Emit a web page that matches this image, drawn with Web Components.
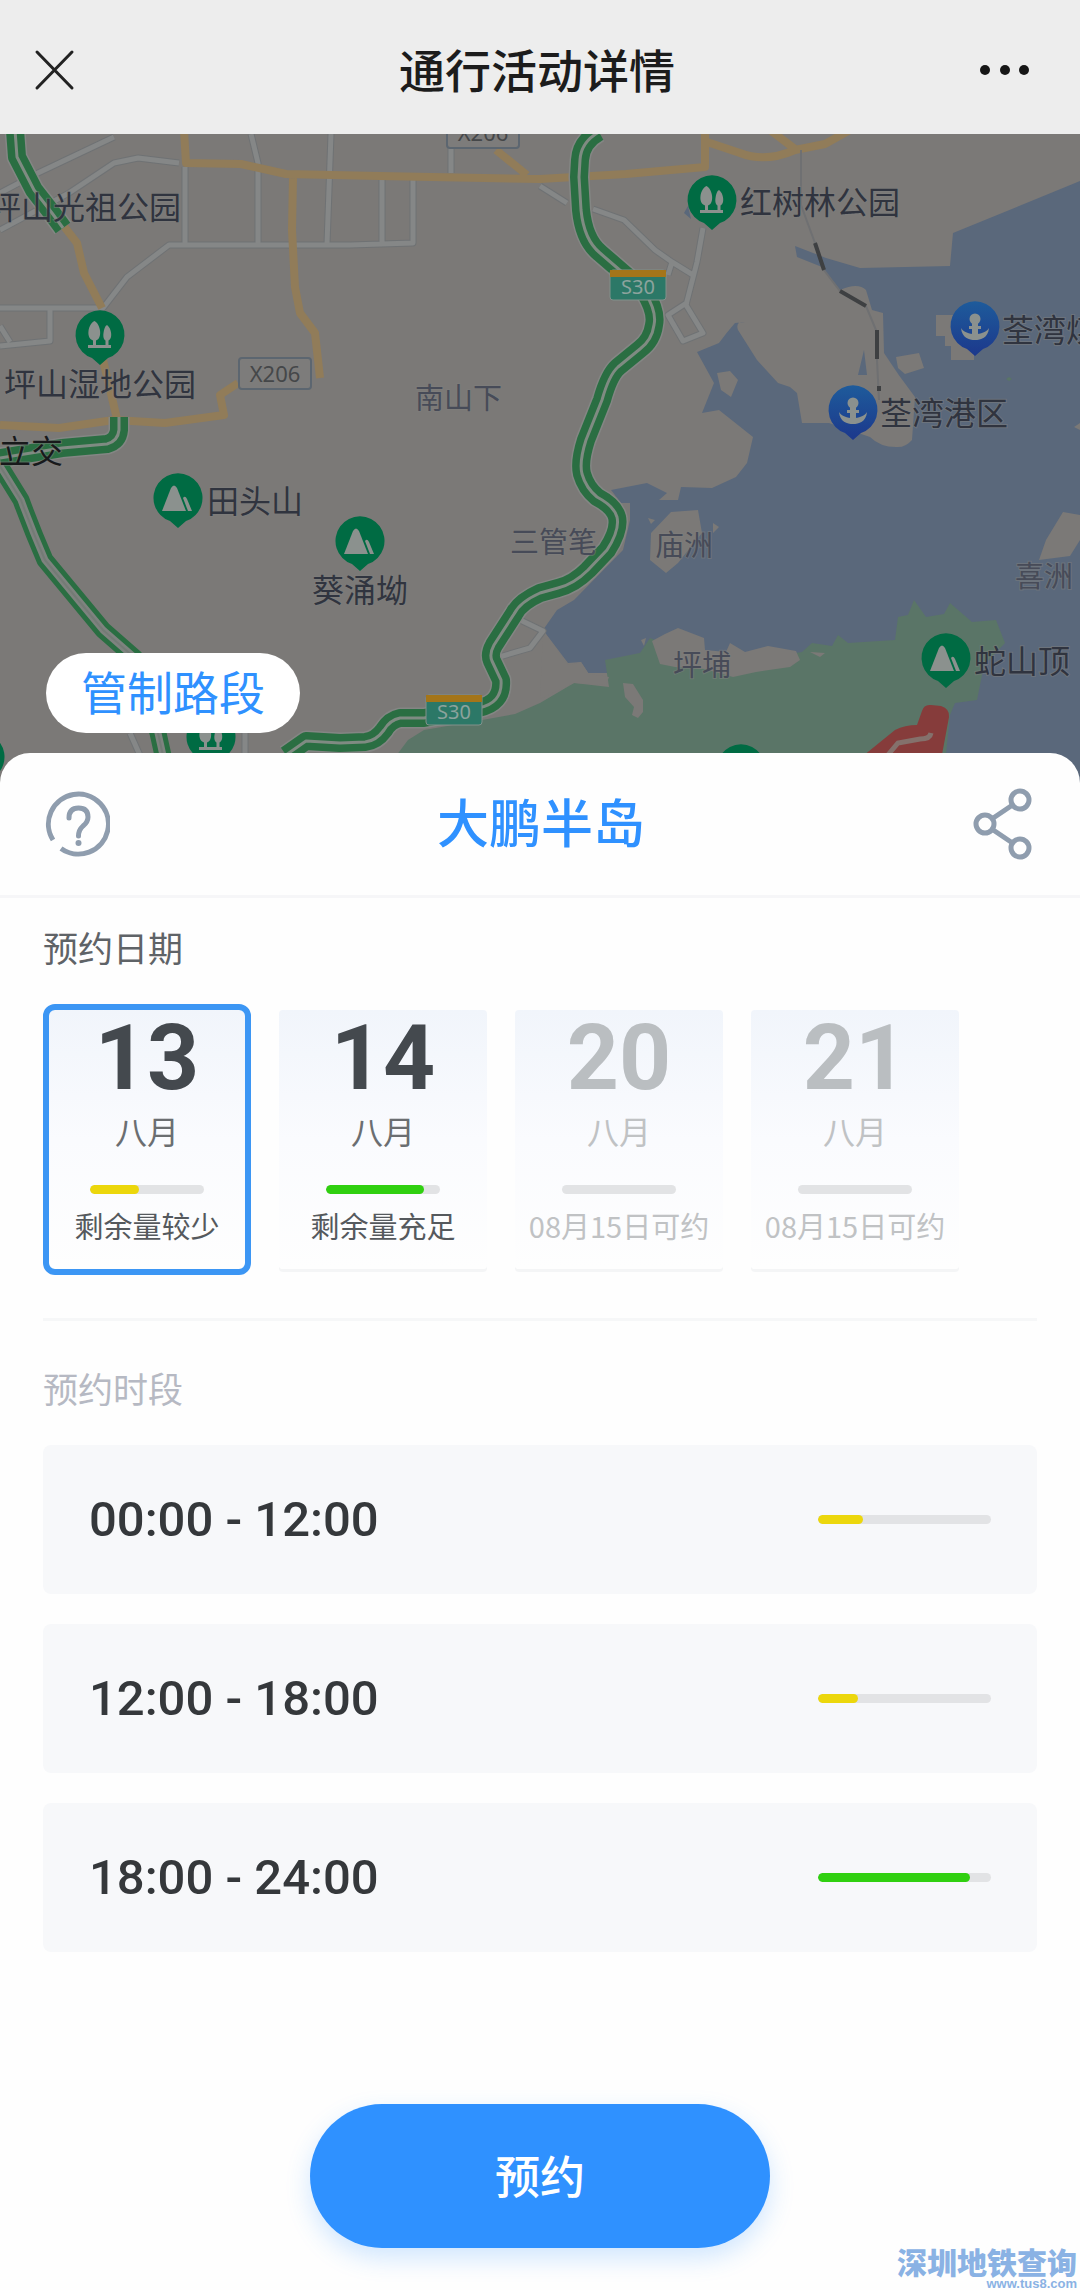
<!DOCTYPE html>
<html lang="zh-CN">
<head>
<meta charset="utf-8">
<meta name="viewport" content="width=device-width, initial-scale=1">
<title>通行活动详情</title>
<style>
body{margin:0;background:#fefefe;font-family:"Noto Sans CJK SC",sans-serif;color:#444a50}
</style>
</head>
<body>
<booking-page></booking-page>

<script>
class Base extends HTMLElement {
  connectedCallback() {
    if (this.shadowRoot) return;
    const root = this.attachShadow({ mode: 'open' });
    root.innerHTML = '<style>:host{display:block;box-sizing:border-box}*{box-sizing:border-box}button{font-family:inherit;margin:0;padding:0;border:0;background:none;cursor:pointer;color:inherit}svg{display:block}</style>' + this.view();
  }
}

customElements.define('nav-header', class extends Base {
  view() {
    return `<style>
      header{display:flex;align-items:center;justify-content:space-between;height:134px;padding:6px 50px 0 32px;background:#ededed;color:#1c1c1c}
      h1{margin:0;padding-bottom:4px;font-size:46px;line-height:60px;font-weight:500}
      .end{width:50px}
      .start{width:62px}
    </style>
    <header>
      <button class="start" aria-label="关闭"><svg width="46" height="46" viewBox="0 0 46 46" stroke="#222" stroke-width="3" stroke-linecap="round"><path d="M5 5L40 41M40 5L5 41"/></svg></button>
      <h1><slot></slot></h1>
      <button class="end" aria-label="更多"><svg width="50" height="20" viewBox="0 0 50 20" fill="#161616"><circle cx="5" cy="10" r="5"/><circle cx="25" cy="10" r="5"/><circle cx="44" cy="10" r="5"/></svg></button>
    </header>`;
  }
});

customElements.define('route-map', class extends Base {
  view() {
    const label = (x, cy, t, s = 32, cls = '') => `<text x="${x}" y="${cy + Math.round(s * 0.38) - 1}" font-size="${s}" class="${cls}">${t}</text>`;
    const pin = (x, y, kind) => {
      const art = {
        park: '<path d="M-5.500-14C-1.500-12 1-5 0 0C-.5 3-2 5-4 5.500V10H-1V12H-12V10H-7V5.500C-11 4-12 0-11.500-4C-11-9-8-13-5.500-14Z"/><path d="M7-10C10-8 12-2 11 2C10.500 4 9.500 5 8.500 5.500V10H11V13H-12V10H5.500V5.500C3.500 4.500 3 1 3.500-2C4-6 5-9 7-10Z"/>',
        peak: '<path d="M-16 13L-7-10Q-4-15-1-10L8 13Z"/><path d="M5 0Q7-3 9 1L14 13H10Z"/>',
        port: '<circle cx="0" cy="-7" r="5.500"/><path d="M-3-3H3V8H-3ZM-6 0H6V3H-6Z"/><path d="M-14 2C-9 10 9 10 14 2C13 12 6 14 0 14C-6 14-13 12-14 2Z"/>'
      }[kind];
      return `<g transform="translate(${x} ${y})"><path d="M0 30L-8 23A24.500 24.500 0 1 1 8 23Z" fill="${kind === 'port' ? 'url(#pb)' : '#006b43'}"/><g fill="#8b918e">${art}</g></g>`;
    };
    const s30 = (x, y) => `<g><rect x="${x}" y="${y}" width="56" height="30" rx="3" fill="#2c7867" stroke="#82918b"/><path d="M${x} ${y}H${x + 56}V${y + 7}H${x}Z" fill="#a47519"/><text x="${x + 28}" y="${y + 24}" font-size="20" text-anchor="middle" class="road s">S30</text></g>`;
    const x206 = (x, y) => `<g><rect x="${x}" y="${y}" width="72" height="31" rx="3" fill="#7d7c7b" stroke="#5c6670" stroke-width="2"/><text x="${x + 36}" y="${y + 24}" font-size="22" text-anchor="middle" class="road">X206</text></g>`;
    const highways = [
      'M15 130L17 157L34 190L52 213L63 228',
      'M119 417V430Q118 441 107 444L62 448L0 458',
      'M599 132Q581 142 580 160L579 177L581 210Q584 240 600 253L622 272L645 292Q657 312 654 325Q652 340 640 349L618 367Q609 375 602 400L586 440Q579 462 582 474Q586 488 597 497Q614 506 617 517Q620 530 607 550L588 570Q574 584 558 588L540 593Q520 602 514 614L494 645Q489 654 492 661L501 680Q502 692 496 699Q490 706 478 708L424 718H400Q390 720 384 730Q376 741 365 742L340 743L306 741L286 755'
    ];
    const thin = 'M0 466L21 500Q32 530 45 560L103 630L135 658L158 733L164 760';
    const lanes = 'M251 134L258 163V244M331 134L327 244M185 167V245M382 178V243M413 180V243L350 245H169L127 277L103 308H0M50 308V341L0 346M10 342L0 326M179 163L138 158L114 163L69 193L0 230M114 137L38 173L0 193M451 134V173M540 186L567 203M593 209L624 220L655 250L672 262L693 275M703 228L697 262L686 305L703 333L683 341L668 315L688 302M672 262L668 275M130 733L142 760M245 733V760M496 658L530 648L543 631L514 617';
    return `<style>
      :host{position:relative;height:650px;overflow:hidden;background:#7b7977}
      svg{width:100%;height:100%}
      text{fill:#30343f;paint-order:stroke;stroke:#7f7f7e;stroke-width:2px;stroke-opacity:.5}
      .minor{fill:#474b58}.dark{fill:#18191b}
      .road{font-family:"Noto Sans",sans-serif;fill:#454749;stroke:none}.s{fill:#8ca39d}
      button{position:absolute;left:46px;top:519px;width:254px;height:80px;border-radius:40px;background:#fff;color:#2f91ff;font-size:46px;line-height:74px;padding-bottom:6px}
    </style>
    <svg viewBox="0 134 1080 650" preserveAspectRatio="xMidYMin slice" role="img" aria-label="地图">
      <defs><linearGradient id="pb" x2="0" y2="1"><stop stop-color="#1e5b9b"/><stop offset="1" stop-color="#1c388c"/></linearGradient></defs>
      <rect y="134" width="1080" height="650" fill="#7b7977"/>
      <path fill="#5a687b" d="M1080 181L953 233L950 266L860 268L826 258L795 246L797 257L822 267L840 290Q858 282 866 290L872 310L883 313L884 353Q898 375 915 397L912 440Q905 448 896 447Q880 447 870 437L829 423H802L797 393L790 387L778 383L757 360L738 330Q735 321 745 322L735 323Q727 332 719 343L697 352L714 383L702 413L719 410L753 437L747 463L736 477L712 488L681 487L678 500H659L667 493L647 483L611 490L621 503H630V520L623 550L574 600L557 610L543 630L568 663L581 662L588 673H609V784H1080Z"/>
      <path fill="#7b7977" d="M671 512L698 510L702 533L678 563L666 573L650 560L651 533ZM1063 512L1080 515V540L1070 556L1039 560L1046 540ZM717 373L730 371L738 380L731 397L721 390ZM896 357L919 353L924 368L905 374L898 368ZM936 315H958V335H974V360H951V346H945V336H936ZM1074 427L1080 423V430ZM648 518L655 520L651 524ZM713 523L719 527L713 533Z"/>
      <path fill="#5a7567" d="M1006 379L1009 377L1012 379L1009 381Z"/>
      <path fill="#5a687b" d="M864 350L867 375H858ZM688 206L684 213L691 219Z"/>
      <path fill="#5a7567" d="M393 760L408 740L424 730L482 720L515 714L540 703L574 683L609 687L605 660L640 653L650 638L680 650L733 663L802 652L812 643L832 646L838 635L848 643L895 640L898 617L908 615L914 600L926 617L944 614L950 603L972 622L996 620L1005 643L984 665L977 700L955 703L950 715L943 784H393Z"/>
      <path fill="#7b7977" d="M652 641L665 634L678 628L704 638L705 650L726 652L730 643L745 652L768 646L796 651L800 660L790 667L756 672L733 677L705 669L675 667L660 664ZM543 630L568 665L581 662L589 674L609 677L606 685L574 683L540 699ZM623 683L633 684L643 700V712L638 718L632 715L634 707L625 697ZM810 652L825 653L820 657ZM641 640L646 638L644 646Z"/>
      <path fill="none" stroke="#6f7274" stroke-width="7" stroke-linejoin="round" d="${lanes}"/>
      <path fill="none" stroke="#858787" stroke-width="5" stroke-linejoin="round" d="${lanes}"/>
      <path fill="none" stroke="#917c59" stroke-width="8" stroke-linejoin="round" d="M184 130L186 163L241 164L286 174L379 176L540 179L626 174L705 167V130M707 142L740 153Q765 163 795 150L825 144L850 130M770 130L795 149M496 150L527 175M293 177L292 230L295 287L300 313L315 333L320 378M63 225L77 243L84 273L102 308M103 360L117 419M0 425L59 428L114 420L165 423L224 415L220 395L238 383"/>
      <path fill="none" stroke="#6f7072" stroke-width="2" d="M801 150V205L815 243L824 270L840 291L866 306L876 330L877 360L879 400"/>
      <path stroke="#3e4042" stroke-width="4" d="M815 243L824 270M840 291L866 306M877 330V359M879 386V391"/>
      <g fill="none" stroke-linejoin="round">
        ${highways.map(d => `<path d="${d}" stroke="#848684" stroke-width="21"/><path d="${d}" stroke="#2a6e42" stroke-width="18"/><path d="${d}" stroke="#7f8b82" stroke-width="3"/>`).join('')}
        <path d="${thin}" stroke="#2a6e42" stroke-width="17"/><path d="${thin}" stroke="#7e837f" stroke-width="7"/><path d="${thin}" stroke="#747b76" stroke-width="2"/>
      </g>
      <path fill="#863c3b" d="M922 711Q924 704 931 705L941 706Q950 709 949 717L941 760H858L895 730Q905 725 917 725Z"/>
      <path fill="none" stroke="#84716c" stroke-width="5" d="M887 756L898 743L920 739Q930 739 931 733"/>
      ${x206(239, 358)}${x206(447, 117)}${s30(610, 270)}${s30(426, 695)}
      ${pin(100, 335, 'park')}${pin(712, 200, 'park')}${pin(211, 737, 'park')}
      ${pin(178, 498, 'peak')}${pin(360, 541, 'peak')}${pin(946, 658, 'peak')}${pin(741, 769, 'peak')}${pin(-20, 757, 'park')}
      ${pin(975, 326, 'port')}${pin(853, 410, 'port')}
      ${label(-11, 208, '坪山光祖公园')}${label(4, 385, '坪山湿地公园')}${label(740, 203, '红树林公园')}
      ${label(-1, 452, '立交', 32, 'dark')}${label(207, 502, '田头山')}${label(312, 591, '葵涌坳')}
      ${label(974, 662, '蛇山顶')}${label(880, 414, '荃湾港区')}${label(1002, 331, '荃湾煤')}
      ${label(415, 399, '南山下', 29, 'minor')}${label(510, 543, '三管笔', 29, 'minor')}${label(655, 546, '庙洲', 29, 'minor')}
      ${label(1015, 577, '喜洲', 29, 'minor')}${label(673, 666, '坪埔', 29, 'minor')}
    </svg>
    <button><slot></slot></button>`;
  }
});

customElements.define('sheet-header', class extends Base {
  view() {
    return `<style>
      header{display:flex;align-items:center;justify-content:space-between;height:145px;padding:0 44px;border-bottom:3px solid #f6f6f8}
      h2{margin:0;font-size:52px;line-height:72px;font-weight:500;color:#2f91ff;padding-bottom:6px}
    </style>
    <header>
      <button aria-label="帮助"><svg width="66" height="70" viewBox="0 0 66 70" fill="none" stroke="#8f9dae" stroke-width="5"><path d="M9 51A30 30 0 1 1 17 59.500"/><path d="M25 29Q25 19 34.500 19T44 28Q44 33 39 37Q34.500 41 34.500 47" stroke-linecap="round"/><circle cx="34.500" cy="54" r="3" fill="#8f9dae" stroke="none"/></svg></button>
      <h2><slot></slot></h2>
      <button aria-label="分享"><svg width="64" height="74" viewBox="0 0 64 74" fill="none" stroke="#8f9dae" stroke-width="5"><circle cx="13" cy="37" r="9"/><circle cx="48" cy="13" r="9"/><circle cx="48" cy="61" r="9"/><path d="M20.500 31.500L40.500 18M20.500 42.500L40.500 56"/></svg></button>
    </header>`;
  }
});

customElements.define('quota-bar', class extends Base {
  view() {
    const v = this.getAttribute('value') || 0;
    const c = this.getAttribute('level') === 'high' ? '#30d010' : '#ecd70c';
    return `<style>
      :host{height:9px}
      .track{height:9px;border-radius:5px;background:#e2e3e5;overflow:hidden}
      .fill{height:9px;width:${v}%;border-radius:5px;background:${c}}
    </style><div class="track" role="meter" aria-label="剩余量" aria-valuemin="0" aria-valuemax="100" aria-valuenow="${v}"><div class="fill"></div></div>`;
  }
});

customElements.define('date-card', class extends Base {
  view() {
    const a = n => this.getAttribute(n) || '';
    const off = this.hasAttribute('off');
    return `<style>
      button{display:flex;flex-direction:column;align-items:center;width:208px;margin:6px 0;padding-bottom:24px;background:linear-gradient(#f1f5fb,#fafbfe 50%,#fefefe);box-shadow:0 3px 0 #f4f5f6;border-radius:4px;color:#44494e}
      :host([selected]) button{margin:0;border:6px solid #3c96f4;border-radius:12px;box-shadow:none}
      .day{font:700 91px/96px Roboto,sans-serif}
      .month{font-size:32px;line-height:48px;color:#6b6e71}
      quota-bar{width:114px;margin:31px 0 11px}
      .note{font-size:29px;line-height:40px;white-space:nowrap;color:#55595d}
      :host([off]) .day{color:#babec1}:host([off]) .month,:host([off]) .note{color:#c0c2c4}
    </style>
    <button ${off ? 'disabled' : ''} aria-pressed="${this.hasAttribute('selected')}">
      <span class="day">${a('day')}</span><span class="month">${a('month')}</span>
      <quota-bar value="${a('value')}" level="${a('level')}"></quota-bar>
      <span class="note"><slot></slot></span>
    </button>`;
  }
});

customElements.define('time-slot', class extends Base {
  view() {
    return `<style>
      button{display:flex;align-items:center;justify-content:space-between;width:100%;height:149px;padding:0 46px;background:#f7f8fa;border-radius:8px;color:#35383b}
      .time{font:500 49px/60px Roboto,sans-serif}
      quota-bar{width:173px}
    </style>
    <button><span class="time"><slot></slot></span><quota-bar value="${this.getAttribute('value')}" level="${this.getAttribute('level')}"></quota-bar></button>`;
  }
});

customElements.define('site-mark', class extends Base {
  view() {
    return `<style>
      :host{position:absolute;right:3px;bottom:0;text-align:right;color:#8ab2e4}
      .name{font-size:30px;line-height:32px;font-weight:900}
      .url{font:700 13px/13px "Liberation Sans",sans-serif}
    </style><div class="name">深圳地铁查询</div><div class="url">www.tus8.com</div>`;
  }
});

customElements.define('booking-page', class extends Base {
  view() {
    return `<style>
      :host{position:relative}
      main{position:relative;margin-top:-31px;border-radius:30px 30px 0 0;background:#fefefe;overflow:hidden}
      .body{padding:24px 43px 42px}
      h3{margin:0 0 32px;font-size:35px;line-height:50px;font-weight:400;color:#5f6367}
      h3.dim{color:#b6b9c3}
      .dates{display:flex;gap:28px}
      hr{height:3px;margin:43px 0 42px;border:0;background:#f6f7f8}
      .slots{display:flex;flex-direction:column;gap:30px}
      .submit{display:block;width:460px;height:144px;margin:152px auto 0;padding-bottom:4px;border-radius:72px;background:#2f91ff;box-shadow:0 10px 24px rgba(47,145,255,.22);color:#fff;font-size:45px;font-weight:500}
    </style>
    <nav-header>通行活动详情</nav-header>
    <route-map>管制路段</route-map>
    <main>
      <sheet-header>大鹏半岛</sheet-header>
      <div class="body">
        <h3>预约日期</h3>
        <div class="dates">
          <date-card selected day="13" month="八月" value="43" level="low">剩余量较少</date-card>
          <date-card day="14" month="八月" value="86" level="high">剩余量充足</date-card>
          <date-card off day="20" month="八月" value="0">08月15日可约</date-card>
          <date-card off day="21" month="八月" value="0">08月15日可约</date-card>
        </div>
        <hr>
        <h3 class="dim">预约时段</h3>
        <div class="slots">
          <time-slot value="26" level="low">00:00 - 12:00</time-slot>
          <time-slot value="23" level="low">12:00 - 18:00</time-slot>
          <time-slot value="88" level="high">18:00 - 24:00</time-slot>
        </div>
        <button class="submit">预约</button>
      </div>
    </main>
    <site-mark></site-mark>`;
  }
});
</script>
</body>
</html>
